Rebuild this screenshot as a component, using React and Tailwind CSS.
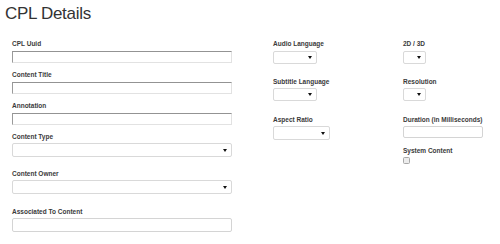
import React from 'react';

// small bold field caption
const Label = ({ children, className = '' }) => (
    <div className={`text-[6.5px] leading-[9px] font-bold text-[#3a3a3a] whitespace-nowrap ${className}`}>{children}</div>
);

// old-style inset text box
const InsetInput = ({ className = '' }) => (
    <div className={`h-[12px] bg-white border border-t-[#939393] border-l-[#9a9a9a] border-r-[#e2e2e2] border-b-[#e2e2e2] ${className}`} />
);

const FlatInput = ({ className = '' }) => (
    <div className={`bg-white border border-[#d4d4d4] rounded-[2px] ${className}`} />
);

const Select = ({ className = '' }) => (
    <div className={`flex items-center justify-end bg-white border border-[#d9d9d9] rounded-[2px] pr-[4px] ${className}`}>
        <svg width="4" height="3" viewBox="0 0 4 3">
            <path d="M0 0h4L2 3z" fill="#111" />
        </svg>
    </div>
);

export default function App() {
    return (
        <div className="w-[500px] h-[244px] bg-white overflow-hidden antialiased font-['Liberation_Sans',Arial,sans-serif] text-[#333]">
            <h1 className="text-[17px] leading-[18px] tracking-[-0.3px] font-normal pl-[5px] pt-[5px] text-[#333]">CPL Details</h1>
            <div className="flex pl-[12px] mt-[16px]">
                <div className="w-[220px] flex flex-col">
                    <Label>CPL Uuid</Label>
                    <InsetInput className="mt-[3px]" />
                    <Label className="mt-[7px]">Content Title</Label>
                    <InsetInput className="mt-[3px]" />
                    <Label className="mt-[7px]">Annotation</Label>
                    <InsetInput className="mt-[3px]" />
                    <Label className="mt-[7px]">Content Type</Label>
                    <Select className="mt-[2px] h-[14px]" />
                    <Label className="mt-[12px]">Content Owner</Label>
                    <Select className="mt-[2px] h-[14px]" />
                    <Label className="mt-[13px]">Associated To Content</Label>
                    <FlatInput className="mt-[2px] h-[14px]" />
                </div>
                <div className="ml-[41px] w-[130px] flex flex-col">
                    <Label>Audio Language</Label>
                    <Select className="mt-[3px] h-[13px] w-[44px]" />
                    <Label className="mt-[13px]">Subtitle Language</Label>
                    <Select className="mt-[2px] h-[13px] w-[44px]" />
                    <Label className="mt-[14px]">Aspect Ratio</Label>
                    <Select className="mt-[2px] h-[14px] w-[57px]" />
                </div>
                <div className="flex flex-col">
                    <Label>2D / 3D</Label>
                    <Select className="mt-[3px] h-[13px] w-[23px]" />
                    <Label className="mt-[13px]">Resolution</Label>
                    <Select className="mt-[2px] h-[13px] w-[23px]" />
                    <Label className="mt-[14px]">Duration (in Milliseconds)</Label>
                    <FlatInput className="mt-[2px] h-[12px] w-[80px]" />
                    <Label className="mt-[8px]">System Content</Label>
                    <div className="mt-[2px] w-[7px] h-[7px] rounded-[1.5px] border border-[#a8a8a8] bg-[#ececec]" />
                </div>
            </div>
        </div>
    );
}
